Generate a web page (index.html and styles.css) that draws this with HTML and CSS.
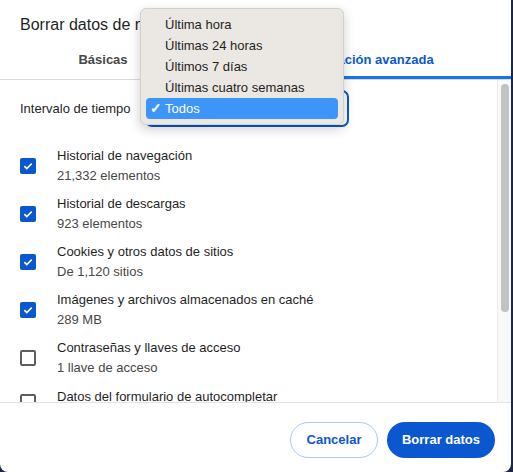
FILE: index.html
```html
<!DOCTYPE html>
<html lang="es">
  <head>
    <meta charset="UTF-8" />
    <title>Borrar datos de navegación</title>
    <link rel="stylesheet" href="styles.css">
  </head>
  <body>
    <div class="dialog">
      <header class="dialog-header">
        <h1>Borrar datos de navegación</h1>
      </header>

      <div class="tabs">
        <div class="tab">Básicas</div>
        <div class="tab active">Configuración avanzada</div>
      </div>

      <div class="body">
        <div class="content">
          <div class="range-row">
            <span class="range-label">Intervalo de tiempo</span>
            <div class="select"></div>
          </div>

          <div class="item">
            <span class="check on"></span>
            <div class="item-text">
              <div class="item-title">Historial de navegación</div>
              <div class="item-sub">21,332 elementos</div>
            </div>
          </div>
          <div class="item">
            <span class="check on"></span>
            <div class="item-text">
              <div class="item-title">Historial de descargas</div>
              <div class="item-sub">923 elementos</div>
            </div>
          </div>
          <div class="item">
            <span class="check on"></span>
            <div class="item-text">
              <div class="item-title">Cookies y otros datos de sitios</div>
              <div class="item-sub">De 1,120 sitios</div>
            </div>
          </div>
          <div class="item">
            <span class="check on"></span>
            <div class="item-text">
              <div class="item-title">Imágenes y archivos almacenados en caché</div>
              <div class="item-sub">289 MB</div>
            </div>
          </div>
          <div class="item">
            <span class="check"></span>
            <div class="item-text">
              <div class="item-title">Contraseñas y llaves de acceso</div>
              <div class="item-sub">1 llave de acceso</div>
            </div>
          </div>
          <div class="item last">
            <span class="check"></span>
            <div class="item-text">
              <div class="item-title">Datos del formulario de autocompletar</div>
            </div>
          </div>
        </div>
        <div class="scrollbar"><div class="thumb"></div></div>
      </div>

      <footer class="dialog-footer">
        <button class="btn btn-outline">Cancelar</button>
        <button class="btn btn-primary">Borrar datos</button>
      </footer>

      <ul class="menu">
        <li>Última hora</li>
        <li>Últimas 24 horas</li>
        <li>Últimos 7 días</li>
        <li>Últimas cuatro semanas</li>
        <li class="selected">Todos</li>
      </ul>
    </div>
  </body>
</html>
```

FILE: styles.css
```css
body {
  margin: 0;
  padding: 0;
  background-color: #1b2845;
  font-family: "Liberation Sans", Arial, sans-serif;
  color: #1f1f1f;
}

.dialog {
  position: relative;
  width: 511px;
  height: 472px;
  background-color: white;
  border-radius: 0 0 8px 8px;
  display: flex;
  flex-direction: column;
  overflow: hidden;
}

.dialog-header {
  height: 44px;
  padding: 0 20px;
  display: flex;
  align-items: center;
}

.dialog-header h1 {
  margin: 6px 0 0;
  font-size: 16px;
  font-weight: normal;
  color: #1f1f1f;
}

.tabs {
  display: flex;
  height: 35px;
  border-bottom: 1px solid #dadada;
}

.tab {
  width: 206px;
  display: flex;
  align-items: center;
  justify-content: center;
  padding-bottom: 4px;
  font-size: 13px;
  font-weight: bold;
  color: #474747;
}

.tab.active {
  flex: 1;
  color: #0b57d0;
  box-shadow: inset 0 -3px 0 #1a73e8;
}

.body {
  flex: 1;
  display: flex;
  min-height: 0;
  border-bottom: 1px solid #e3e3e3;
}

.content {
  flex: 1;
  overflow: hidden;
  padding: 10px 20px 0;
}

.range-row {
  display: flex;
  align-items: center;
  height: 37px;
  margin-bottom: 15px;
}

.range-label {
  font-size: 13px;
  color: #1f1f1f;
  width: 125px;
}

.select {
  width: 200px;
  height: 33px;
  border: 2px solid #0b57d0;
  border-radius: 7px;
}

.item {
  display: flex;
  align-items: center;
  height: 48px;
}

.item.last {
  align-items: flex-start;
  padding-top: 5px;
}

.item.last .check {
  margin-top: 7px;
}

.check {
  box-sizing: border-box;
  width: 16px;
  height: 16px;
  margin-right: 21px;
  border: 2px solid #5f5f5f;
  border-radius: 2px;
  flex-shrink: 0;
}

.check.on {
  border: none;
  background: #0b57d0 url("data:image/svg+xml;utf8,<svg xmlns='http://www.w3.org/2000/svg' width='16' height='16'><path d='M4.3 8.2l2.5 2.4 4.9-5' fill='none' stroke='white' stroke-width='1.6'/></svg>") no-repeat center;
}

.item-title {
  font-size: 13px;
  line-height: 20px;
  color: #1f1f1f;
}

.item-sub {
  font-size: 13px;
  line-height: 20px;
  color: #474747;
}

.scrollbar {
  width: 14px;
  background-color: #f9f9f9;
  border-left: 1px solid #ececec;
  padding: 4px 0 0 3px;
  box-sizing: border-box;
}

.thumb {
  width: 8px;
  height: 228px;
  border-radius: 4px;
  background-color: #c2c2c2;
}

.dialog-footer {
  height: 69px;
  display: flex;
  align-items: center;
  justify-content: flex-end;
  gap: 9px;
  padding: 4px 16px 0 0;
  box-sizing: border-box;
}

.btn {
  height: 36px;
  border-radius: 18px;
  font-family: inherit;
  font-size: 13px;
  font-weight: bold;
  padding: 0;
  white-space: nowrap;
  cursor: pointer;
}

.btn-outline {
  width: 88px;
  background: white;
  color: #0b57d0;
  border: 1px solid #a8c7fa;
}

.btn-primary {
  width: 108px;
  background: #0b57d0;
  color: white;
  border: none;
}

.menu {
  position: absolute;
  left: 140px;
  top: 8px;
  width: 192px;
  margin: 0;
  padding: 5px 5px;
  list-style: none;
  background-color: #ebe7e2;
  border: 1px solid #d3cfca;
  border-radius: 6px;
  box-shadow: 0 4px 12px rgba(0, 0, 0, 0.2);
}

.menu li {
  height: 21px;
  line-height: 21px;
  padding-left: 19px;
  font-size: 13px;
  color: #1f1f1f;
  border-radius: 4px;
  position: relative;
}

.menu li.selected {
  background-color: #3d95f8;
  color: white;
}

.menu li.selected::before {
  content: "\2713";
  position: absolute;
  left: 4px;
  font-size: 14px;
  font-weight: bold;
}
```
